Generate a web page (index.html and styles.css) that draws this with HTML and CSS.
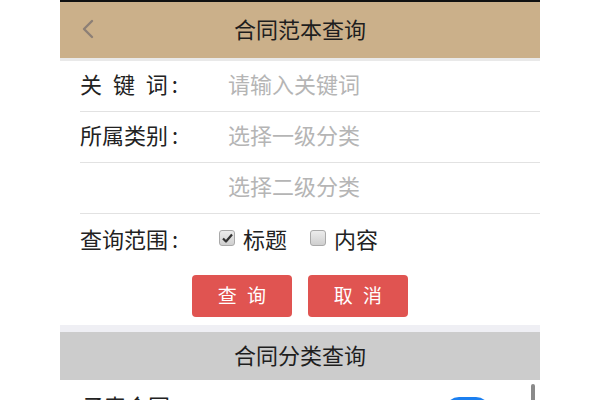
FILE: index.html
```html
<!DOCTYPE html>
<html lang="zh-CN">
<head>
<meta charset="utf-8">
<title>合同范本查询</title>
<link rel="stylesheet" href="styles.css">
</head>
<body>
<div class="phone">
  <header class="topbar">
    <span class="back">
      <svg width="14" height="20" viewBox="0 0 14 20"><polyline points="11,2 3,10 11,18" fill="none" stroke="#8c7f76" stroke-width="2.4" stroke-linecap="round" stroke-linejoin="round"/></svg>
    </span>
    <h1 class="title">合同范本查询</h1>
    <span></span>
  </header>
  <div class="shade"></div>
  <form class="form">
    <div class="row">
      <span class="label spaced">关 键 词<span class="colon">:</span></span>
      <span class="ph">请输入关键词</span>
    </div>
    <div class="row">
      <span class="label">所属类别<span class="colon">:</span></span>
      <span class="ph">选择一级分类</span>
    </div>
    <div class="row">
      <span class="label"></span>
      <span class="ph">选择二级分类</span>
    </div>
    <div class="row last">
      <span class="label">查询范围<span class="colon">:</span></span>
      <span class="opts">
        <span class="opt"><span class="cb checked">
          <svg width="11" height="10" viewBox="0 0 11 10"><path d="M1 5.5 L4 8.5 L10 1.5" fill="none" stroke="#333" stroke-width="2.2" stroke-linejoin="round"/></svg>
        </span>标题</span>
        <span class="opt"><span class="cb"></span>内容</span>
      </span>
    </div>
    <div class="btns">
      <span class="btn">查 询</span>
      <span class="btn">取 消</span>
    </div>
  </form>
  <div class="band"></div>
  <div class="section">合同分类查询</div>
  <div class="item">
    <span class="item-text">子表合同</span>
    <span class="toggle"></span>
  </div>
  <span class="scrollbar"></span>
</div>
</body>
</html>
```

FILE: styles.css
```css
html, body {
  margin: 0;
  padding: 0;
  background: #ffffff;
  height: 400px;
  overflow: hidden;
}
body {
  font-family: "Noto Sans CJK SC", "Noto Sans", sans-serif;
  color: #222;
}
.phone {
  position: relative;
  width: 480px;
  margin: 0 auto;
  border-top: 2px solid #111;
  height: 398px;
  overflow: hidden;
}
.topbar {
  height: 56px;
  box-sizing: border-box;
  padding-bottom: 5px;
  background: #cbb08a;
  display: grid;
  grid-template-columns: 1fr auto 1fr;
  align-items: center;
}
.back {
  padding-left: 21px;
  padding-top: 3px;
  display: flex;
  align-items: center;
}
.title {
  margin: 0;
  font-size: 22px;
  font-weight: normal;
  color: #1e1e1e;
}
.shade {
  height: 3px;
  background: #e9e9e9;
}
.form {
  margin: 0;
  padding-left: 20px;
}
.row {
  height: 51px;
  box-sizing: border-box;
  padding-bottom: 6px;
  border-bottom: 1px solid #e2e2e2;
  display: flex;
  align-items: center;
  font-size: 22px;
}
.row.last {
  border-bottom: none;
  padding-bottom: 3px;
}
.label {
  width: 148px;
  flex: none;
  color: #222;
}
.colon {
  margin-left: 4px;
}
.spaced {
  word-spacing: 6px;
}
.ph {
  color: #b5b5b5;
}
.opts {
  display: flex;
  gap: 23px;
  margin-left: -9px;
  color: #222;
}
.opt {
  display: flex;
  align-items: center;
  gap: 8px;
}
.cb {
  width: 14px;
  height: 14px;
  border: 1px solid #a9a9a9;
  border-radius: 3px;
  background: linear-gradient(#ececec, #cfcfcf);
  display: flex;
  align-items: center;
  justify-content: center;
}
.btns {
  display: flex;
  justify-content: center;
  gap: 16px;
  padding: 10px 0 8px;
  margin-left: -20px;
}
.btn {
  width: 100px;
  height: 42px;
  box-sizing: border-box;
  padding-bottom: 4px;
  border-radius: 4px;
  background: #e05451;
  color: #fff;
  font-size: 19px;
  word-spacing: 6px;
  display: flex;
  align-items: center;
  justify-content: center;
}
.band {
  height: 7px;
  background: #efeff4;
}
.section {
  height: 48px;
  box-sizing: border-box;
  padding-bottom: 5px;
  background: #cccccc;
  display: flex;
  align-items: center;
  justify-content: center;
  font-size: 22px;
  color: #1e1e1e;
}
.item {
  display: flex;
  align-items: flex-start;
  justify-content: space-between;
  padding: 9px 50px 0 22px;
  font-size: 22px;
}
.item-text {
  color: #222;
}
.toggle {
  width: 45px;
  height: 28px;
  margin-top: 8px;
  border-radius: 14px;
  background: #1b7ff0;
}
.scrollbar {
  position: absolute;
  right: 5px;
  top: 382px;
  width: 4px;
  height: 30px;
  border-radius: 2px;
  background: #8a8a8a;
}
```
